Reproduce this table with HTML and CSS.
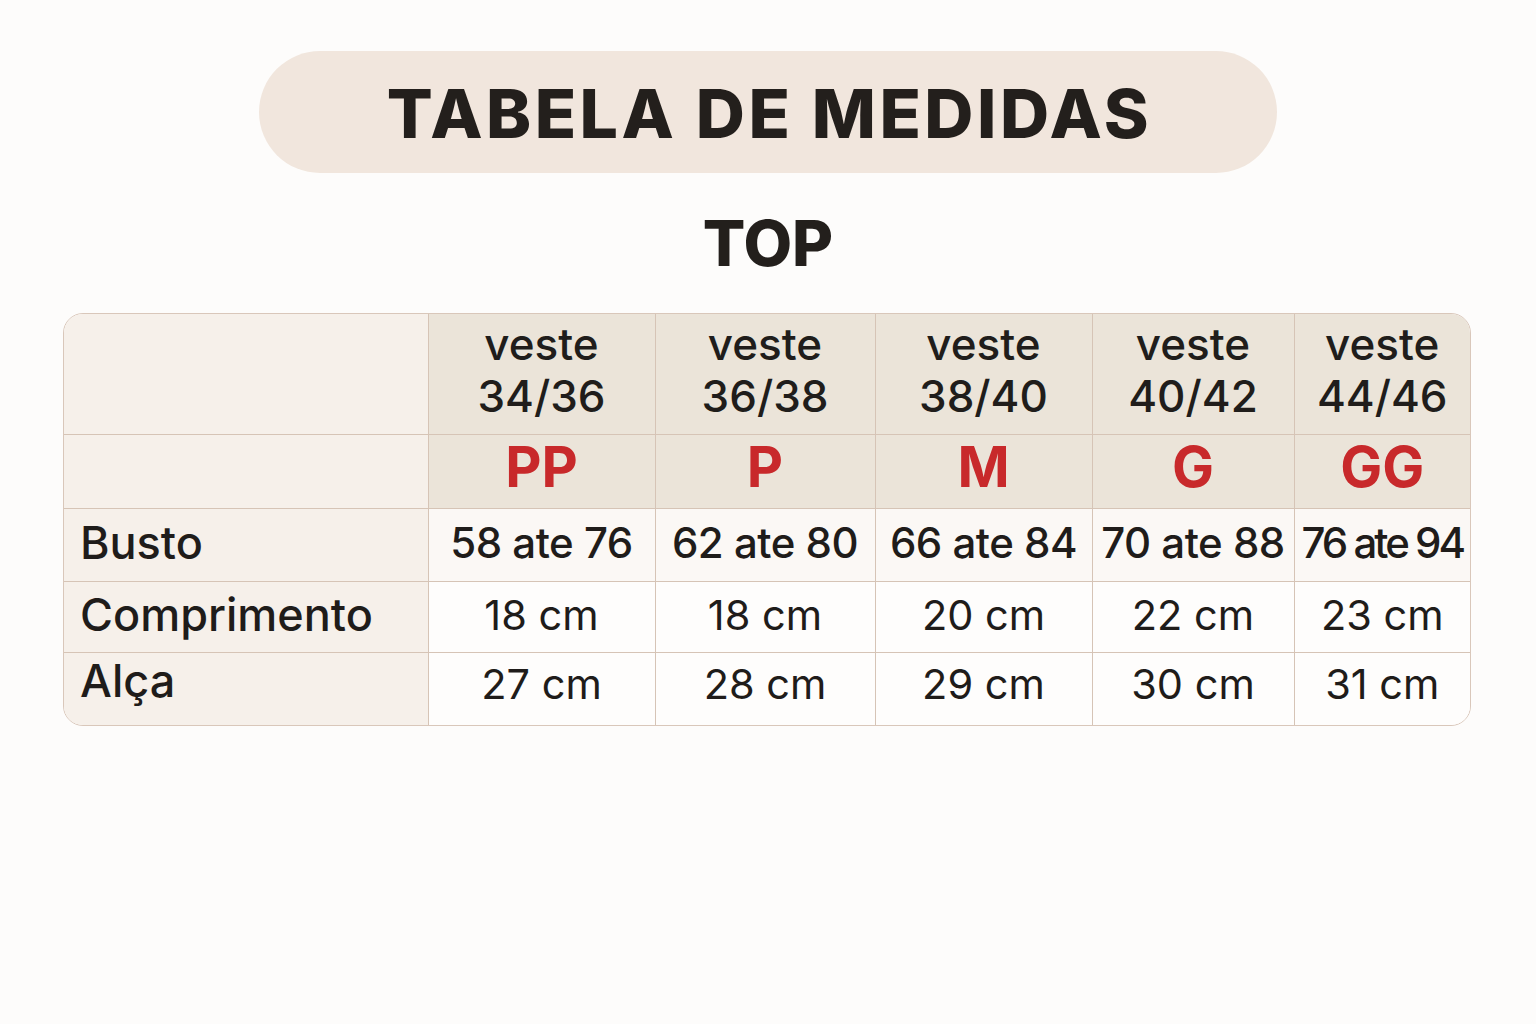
FILE: index.html
```html
<!DOCTYPE html>
<html lang="pt">
<head>
<meta charset="utf-8">
<title>Tabela de Medidas</title>
<link rel="stylesheet" href="styles.css">
</head>
<body>
<main class="page">
  <header class="title-pill"><h1 class="title">TABELA DE MEDIDAS</h1></header>
  <h2 class="subtitle">TOP</h2>
  <div class="table-wrap">
    <table class="sizes">
      <colgroup>
        <col class="c0"><col class="c1"><col class="c2"><col class="c3"><col class="c4"><col class="c5">
      </colgroup>
      <tr class="row-veste">
        <th class="corner"></th>
        <th class="hd">veste<br>34/36</th>
        <th class="hd">veste<br>36/38</th>
        <th class="hd">veste<br>38/40</th>
        <th class="hd">veste<br>40/42</th>
        <th class="hd">veste<br>44/46</th>
      </tr>
      <tr class="row-size">
        <th class="corner"></th>
        <th class="hd size">PP</th>
        <th class="hd size">P</th>
        <th class="hd size">M</th>
        <th class="hd size">G</th>
        <th class="hd size">GG</th>
      </tr>
      <tr class="row-busto">
        <th class="label">Busto</th>
        <td>58 ate 76</td>
        <td>62 ate 80</td>
        <td>66 ate 84</td>
        <td>70 ate 88</td>
        <td class="tight">76 ate 94</td>
      </tr>
      <tr class="row-comp">
        <th class="label">Comprimento</th>
        <td>18 cm</td>
        <td>18 cm</td>
        <td>20 cm</td>
        <td>22 cm</td>
        <td>23 cm</td>
      </tr>
      <tr class="row-alca">
        <th class="label">Alça</th>
        <td>27 cm</td>
        <td>28 cm</td>
        <td>29 cm</td>
        <td>30 cm</td>
        <td>31 cm</td>
      </tr>
    </table>
  </div>
</main>
</body>
</html>
```
FILE: styles.css
```css
html, body {
  margin: 0;
  padding: 0;
  background: #fdfcfb;
}
body {
  width: 1536px;
  height: 1024px;
  overflow: hidden;
  font-family: Inter, "Noto Sans", "Liberation Sans", sans-serif;
  color: #1f1c1a;
}
.page {
  display: flex;
  flex-direction: column;
  align-items: center;
  padding-top: 51px;
}
.title-pill {
  width: 1018px;
  height: 122px;
  border-radius: 61px;
  background: #f1e6dd;
  display: flex;
  align-items: center;
  justify-content: center;
}
.title {
  margin: 0;
  font-size: 68px;
  font-weight: 800;
  letter-spacing: 3.5px;
  color: #231f1c;
  line-height: 1;
  padding-top: 2px;
  padding-left: 3px;
}
.subtitle {
  margin: 39px 0 0;
  font-size: 63px;
  font-weight: 800;
  line-height: 1;
  color: #231f1c;
  height: 101px;
}
.table-wrap {
  margin-left: -2px;
  width: 1406px;
  border: 1.5px solid #d9c7ba;
  border-radius: 20px;
  overflow: hidden;
  background: #fefcfb;
}
.sizes {
  width: 100%;
  border-collapse: collapse;
  table-layout: fixed;
}
.c0 { width: 364px; }
.c1 { width: 227px; }
.c2 { width: 220px; }
.c3 { width: 217px; }
.c4 { width: 202px; }
.c5 { width: auto; }
.sizes th, .sizes td {
  border: 1.5px solid #d6c4b6;
  padding: 0;
  text-align: center;
  font-weight: 500;
}
.sizes tr:first-child > * { border-top: none; }
.sizes tr:last-child > * { border-bottom: none; }
.sizes tr > *:first-child { border-left: none; }
.sizes tr > *:last-child { border-right: none; }
.corner, .label {
  background: #f6f0ea;
}
.hd {
  background: #ebe4d9;
}
.row-veste { height: 120px; }
.row-veste .hd {
  font-size: 44px;
  line-height: 52px;
  padding-bottom: 8px;
  color: #201d1b;
}
.row-size { height: 74px; }
.size {
  font-size: 56px;
  font-weight: 700 !important;
  color: #c8292b;
  line-height: 1;
  padding-bottom: 8px !important;
}
.row-busto { height: 73px; }
.row-comp { height: 71px; }
.row-alca { height: 73px; }
.label {
  text-align: left !important;
  padding-left: 16px !important;
  font-size: 45px;
  letter-spacing: 0;
  color: #1f1c1a;
  padding-bottom: 4px !important;
}
.row-alca .label { padding-bottom: 16px !important; }
.sizes td {
  font-size: 41.5px;
  font-weight: 400;
  color: #1f1c1a;
  padding-bottom: 4px;
}
.row-alca td { padding-bottom: 10px; }
.row-busto td {
  font-size: 42px;
  font-weight: 500;
  background: #fbf8f5;
  letter-spacing: -0.5px;
}
.row-busto td.tight { letter-spacing: -3px; }
.row-comp td, .row-alca td { background: #fefdfc; }
```
